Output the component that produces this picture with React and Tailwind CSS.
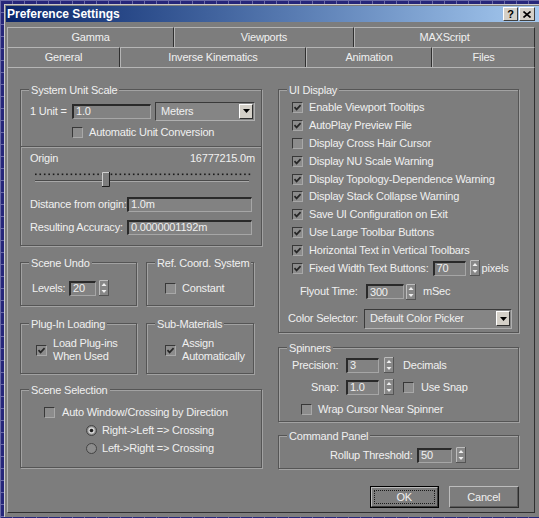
import React from "react";

function Check({ checked }) {
  return (
    <span className="flex h-[11px] w-[11px] shrink-0 items-center justify-center border-t border-l border-r border-b border-t-[#383838] border-l-[#383838] border-r-[#a8a8a8] border-b-[#a8a8a8] bg-[#8c8c8c]">
      {checked && (
        <svg width="9" height="9" className="block">
          <path d="M1.5 4.2 L3.6 6.4 L7.6 2.2" stroke="#262626" strokeWidth="1.7" fill="none" />
        </svg>
      )}
    </span>
  );
}

function Radio({ on }) {
  return (
    <svg width="11" height="11" className="block shrink-0">
      <circle cx="5.5" cy="5.5" r="5" fill="#8c8c8c" stroke="#444444" />
      {on && <circle cx="5.5" cy="5.5" r="3.2" fill="#d6d6d6" />}
      {on && <circle cx="5.5" cy="5.5" r="1.8" fill="#1e1e1e" />}
    </svg>
  );
}

function Field({ className, value }) {
  return (
    <div
      className={`flex h-[15px] shrink-0 items-center overflow-hidden whitespace-nowrap border-t-2 border-l-2 border-r border-b border-t-[#2a2a2a] border-l-[#2a2a2a] border-r-[#a6a6a6] border-b-[#a6a6a6] bg-[#828282] pl-[2px] leading-none ${className}`}
    >
      {value}
    </div>
  );
}

function Spin() {
  return (
    <svg width="10" height="16" className="block shrink-0">
      <rect x="0.5" y="0.5" width="9" height="15" fill="#878787" stroke="#555555" />
      <path d="M0.5 15 V0.5 H9" stroke="#bdbdbd" fill="none" />
      <path d="M5 3 L7.5 6 H2.5 Z" fill="#f0f0f0" />
      <path d="M5 13 L7.5 10 H2.5 Z" fill="#f0f0f0" />
    </svg>
  );
}

function DropBtn() {
  return (
    <div className="flex h-[15px] w-[14px] shrink-0 items-center justify-center border-t border-l border-r border-b border-t-white border-l-white border-r-[#303030] border-b-[#303030] bg-[#d4d0c8]">
      <svg width="7" height="4" className="block">
        <path d="M0 0 H7 L3.5 4 Z" fill="#000" />
      </svg>
    </div>
  );
}

function Drop({ className, value }) {
  return (
    <div
      className={`flex shrink-0 items-center border-t border-l border-r border-b border-t-[#3a3a3a] border-l-[#3a3a3a] border-r-[#b0b0b0] border-b-[#b0b0b0] bg-[#858585] pr-[1px] ${className}`}
    >
      <span className="flex-1 whitespace-nowrap pl-[5px]">{value}</span>
      <DropBtn />
    </div>
  );
}

function Group({ title, className, children }) {
  return (
    <div
      className={`shrink-0 border border-[#555555] shadow-[inset_1px_1px_0_#a2a2a2,1px_1px_0_#a2a2a2] ${className}`}
    >
      <div className="-mt-[7px] ml-[8px] h-[14px] w-fit whitespace-nowrap bg-[#7d7d7d] px-[2px] leading-[14px]">
        {title}
      </div>
      {children}
    </div>
  );
}

function Tab({ className, children }) {
  return (
    <div
      className={`flex h-[20px] items-center justify-center border-t border-l border-r border-t-[#b5b5b5] border-l-[#b5b5b5] border-r-[#303030] ${className}`}
    >
      {children}
    </div>
  );
}

function Slider() {
  const dots = [];
  for (let i = 0; i < 49; i++) {
    dots.push(<rect key={i} x={14 + i * 4.45} y={5.5} width={1.6} height={1.6} fill="#1c1c1c" />);
  }
  return (
    <svg width="240" height="20" className="block">
      {dots}
      <line x1="14" y1="12.5" x2="228" y2="12.5" stroke="#4a4a4a" />
      <line x1="14" y1="13.5" x2="228" y2="13.5" stroke="#a8a8a8" />
      <rect x="81" y="4" width="7" height="14" fill="#7d7d7d" />
      <path d="M81.5 18 V4.5 H88" stroke="#cfcfcf" fill="none" />
      <path d="M88.5 4 V18.5 H81" stroke="#1c1c1c" fill="none" />
    </svg>
  );
}

const uiItems = [
  ["Enable Viewport Tooltips", true],
  ["AutoPlay Preview File", true],
  ["Display Cross Hair Cursor", false],
  ["Display NU Scale Warning", true],
  ["Display Topology-Dependence Warning", true],
  ["Display Stack Collapse Warning", true],
  ["Save UI Configuration on Exit", true],
  ["Use Large Toolbar Buttons", true],
  ["Horizontal Text in Vertical Toolbars", true],
];

export default function App() {
  return (
    <div className="h-[518px] w-[539px] overflow-hidden bg-[#26267a] bg-[linear-gradient(#6a6aa8_1px,transparent_1px),linear-gradient(90deg,#6a6aa8_1px,transparent_1px)] bg-[size:12px_12px] pl-[4px] pt-[4px] font-['Liberation_Sans',Arial,sans-serif] text-[11px] leading-[13px] tracking-[-0.2px] text-[#f0f0f0]">
      <div className="h-[513px] w-[535px] border-l border-t border-[#c8c8c8] bg-[#7d7d7d] pl-[1px] pt-[1px]">
        {/* title bar */}
        <div className="flex h-[16px] items-center bg-linear-to-r from-[#0a246a] to-[#a6caf0] pl-[1px] pr-[4px]">
          <span className="flex-1 text-[12px] font-bold tracking-normal text-white">Preference Settings</span>
          <div className="flex h-[14px] w-[15px] items-center justify-center border-t border-l border-r border-b border-t-white border-l-white border-r-[#404040] border-b-[#404040] bg-[#d4d0c8] text-[11px] font-bold leading-none tracking-normal text-black">
            ?
          </div>
          <div className="ml-[1px] flex h-[14px] w-[16px] items-center justify-center border-t border-l border-r border-b border-t-white border-l-white border-r-[#404040] border-b-[#404040] bg-[#d4d0c8]">
            <svg width="8" height="7" className="block">
              <path d="M0.5 0.5 L7.5 6.5 M7.5 0.5 L0.5 6.5" stroke="#000" strokeWidth="1.6" />
            </svg>
          </div>
        </div>

        {/* tabs */}
        <div className="ml-[1px] mt-[5px] w-[528px]">
          <div className="flex">
            <Tab className="w-[167px]">Gamma</Tab>
            <Tab className="w-[180px]">Viewports</Tab>
            <Tab className="w-[181px]">MAXScript</Tab>
          </div>
          <div className="flex">
            <Tab className="w-[113px]">General</Tab>
            <Tab className="w-[186px]">Inverse Kinematics</Tab>
            <Tab className="w-[126px]">Animation</Tab>
            <Tab className="w-[103px]">Files</Tab>
          </div>

          {/* panel */}
          <div className="flex h-[446px] border-t border-l border-r border-b border-t-[#b5b5b5] border-l-[#b5b5b5] border-r-[#303030] border-b-[#303030] pl-[12px] pt-[21px]">
            {/* left column */}
            <div className="flex w-[242px] flex-col">
              <Group title="System Unit Scale" className="h-[157px] w-[242px]">
                <div className="mt-[4px] flex h-[20px] items-center pl-[9px]">
                  <span className="w-[42px] whitespace-nowrap">1 Unit =</span>
                  <Field className="w-[79px]" value="1.0" />
                  <Drop className="ml-[4px] h-[19px] w-[100px]" value="Meters" />
                </div>
                <div className="flex h-[22px] items-center pl-[51px]">
                  <Check />
                  <span className="ml-[6px] whitespace-nowrap">Automatic Unit Conversion</span>
                </div>
                <div className="mt-[3px] h-[2px] border-t border-b border-t-[#555555] border-b-[#a2a2a2]" />
                <div className="flex h-[20px] items-center justify-between pl-[9px] pr-[6px]">
                  <span>Origin</span>
                  <span>16777215.0m</span>
                </div>
                <Slider />
                <div className="mt-[6px] flex h-[20px] items-center pl-[9px]">
                  <span className="w-[97px] whitespace-nowrap">Distance from origin:</span>
                  <Field className="w-[125px]" value="1.0m" />
                </div>
                <div className="mt-[3px] flex h-[20px] items-center pl-[9px]">
                  <span className="w-[97px] whitespace-nowrap">Resulting Accuracy:</span>
                  <Field className="w-[125px]" value="0.0000001192m" />
                </div>
              </Group>

              <div className="mt-[16px] flex">
                <Group title="Scene Undo" className="h-[44px] w-[117px]">
                  <div className="mt-[8px] flex h-[20px] items-center pl-[11px]">
                    <span className="w-[37px]">Levels:</span>
                    <Field className="w-[27px]" value="20" />
                    <span className="ml-[3px]">
                      <Spin />
                    </span>
                  </div>
                </Group>
                <Group title="Ref. Coord. System" className="ml-[9px] h-[44px] w-[108px]">
                  <div className="mt-[8px] flex h-[20px] items-center pl-[18px]">
                    <Check />
                    <span className="ml-[6px]">Constant</span>
                  </div>
                </Group>
              </div>

              <div className="mt-[17px] flex">
                <Group title="Plug-In Loading" className="h-[51px] w-[117px]">
                  <div className="mt-[6px] flex h-[26px] items-center pl-[15px]">
                    <Check checked />
                    <span className="ml-[6px] whitespace-nowrap">
                      Load Plug-ins
                      <br />
                      When Used
                    </span>
                  </div>
                </Group>
                <Group title="Sub-Materials" className="ml-[9px] h-[51px] w-[108px]">
                  <div className="mt-[6px] flex h-[26px] items-center pl-[18px]">
                    <Check checked />
                    <span className="ml-[6px] whitespace-nowrap">
                      Assign
                      <br />
                      Automatically
                    </span>
                  </div>
                </Group>
              </div>

              <Group title="Scene Selection" className="mt-[15px] h-[79px] w-[242px]">
                <div className="mt-[6px] flex h-[18px] items-center pl-[23px]">
                  <Check />
                  <span className="ml-[7px] whitespace-nowrap">Auto Window/Crossing by Direction</span>
                </div>
                <div className="flex h-[18px] items-center pl-[65px]">
                  <Radio on />
                  <span className="ml-[5px] whitespace-nowrap">Right-&gt;Left =&gt; Crossing</span>
                </div>
                <div className="flex h-[18px] items-center pl-[65px]">
                  <Radio />
                  <span className="ml-[5px] whitespace-nowrap">Left-&gt;Right =&gt; Crossing</span>
                </div>
              </Group>
            </div>

            {/* right column */}
            <div className="ml-[16px] flex w-[241px] flex-col">
              <Group title="UI Display" className="h-[244px] w-[241px]">
                <div className="mt-[2px]">
                  {uiItems.map(([label, on]) => (
                    <div key={label} className="flex h-[17.8px] items-center pl-[13px]">
                      <Check checked={on} />
                      <span className="ml-[6px] whitespace-nowrap">{label}</span>
                    </div>
                  ))}
                  <div className="flex h-[17.8px] items-center pl-[13px]">
                    <Check checked />
                    <span className="ml-[6px] whitespace-nowrap">Fixed Width Text Buttons:</span>
                    <Field className="ml-[4px] w-[33px]" value="70" />
                    <span className="ml-[4px]">
                      <Spin />
                    </span>
                    <span className="ml-[2px]">pixels</span>
                  </div>
                </div>
                <div className="mt-[6px] flex h-[18px] items-center pl-[21px]">
                  <span className="w-[66px] whitespace-nowrap">Flyout Time:</span>
                  <Field className="w-[38px]" value="300" />
                  <span className="ml-[2px]">
                    <Spin />
                  </span>
                  <span className="ml-[7px]">mSec</span>
                </div>
                <div className="mt-[7px] flex h-[22px] items-center pl-[9px]">
                  <span className="w-[76px] whitespace-nowrap">Color Selector:</span>
                  <Drop className="h-[20px] w-[148px]" value="Default Color Picker" />
                </div>
              </Group>

              <Group title="Spinners" className="mt-[14px] h-[75px] w-[241px]">
                <div className="flex h-[20px] items-center pl-[13px]">
                  <span className="w-[54px]">Precision:</span>
                  <Field className="w-[33px]" value="3" />
                  <span className="ml-[5px]">
                    <Spin />
                  </span>
                  <span className="ml-[9px]">Decimals</span>
                </div>
                <div className="flex h-[24px] items-center pl-[32px]">
                  <span className="w-[35px]">Snap:</span>
                  <Field className="w-[33px]" value="1.0" />
                  <span className="ml-[5px]">
                    <Spin />
                  </span>
                  <span className="ml-[9px]">
                    <Check />
                  </span>
                  <span className="ml-[7px] whitespace-nowrap">Use Snap</span>
                </div>
                <div className="flex h-[20px] items-center pl-[22px]">
                  <Check />
                  <span className="ml-[6px] whitespace-nowrap">Wrap Cursor Near Spinner</span>
                </div>
              </Group>

              <Group title="Command Panel" className="mt-[13px] h-[34px] w-[241px]">
                <div className="mt-[2px] flex h-[20px] items-center pl-[51px]">
                  <span className="w-[87px] whitespace-nowrap">Rollup Threshold:</span>
                  <Field className="w-[35px]" value="50" />
                  <span className="ml-[4px]">
                    <Spin />
                  </span>
                </div>
              </Group>

              <div className="mt-[17px] flex h-[22px]">
                <div className="ml-[92px] h-[22px] w-[72px] border border-black">
                  <div className="flex h-full items-center justify-center border-t border-l border-r border-b border-t-[#bcbcbc] border-l-[#bcbcbc] border-r-[#3a3a3a] border-b-[#3a3a3a] p-[2px]">
                    <div className="flex h-full w-full items-center justify-center border border-dotted border-[#1a1a1a]">
                      OK
                    </div>
                  </div>
                </div>
                <div className="ml-[10px] flex h-[22px] w-[74px] items-center justify-center border-t border-l border-r border-b border-t-[#bcbcbc] border-l-[#bcbcbc] border-r-[#2e2e2e] border-b-[#2e2e2e] shadow-[inset_-1px_-1px_0_#5a5a5a]">
                  Cancel
                </div>
              </div>
            </div>
          </div>
        </div>
      </div>
    </div>
  );
}
